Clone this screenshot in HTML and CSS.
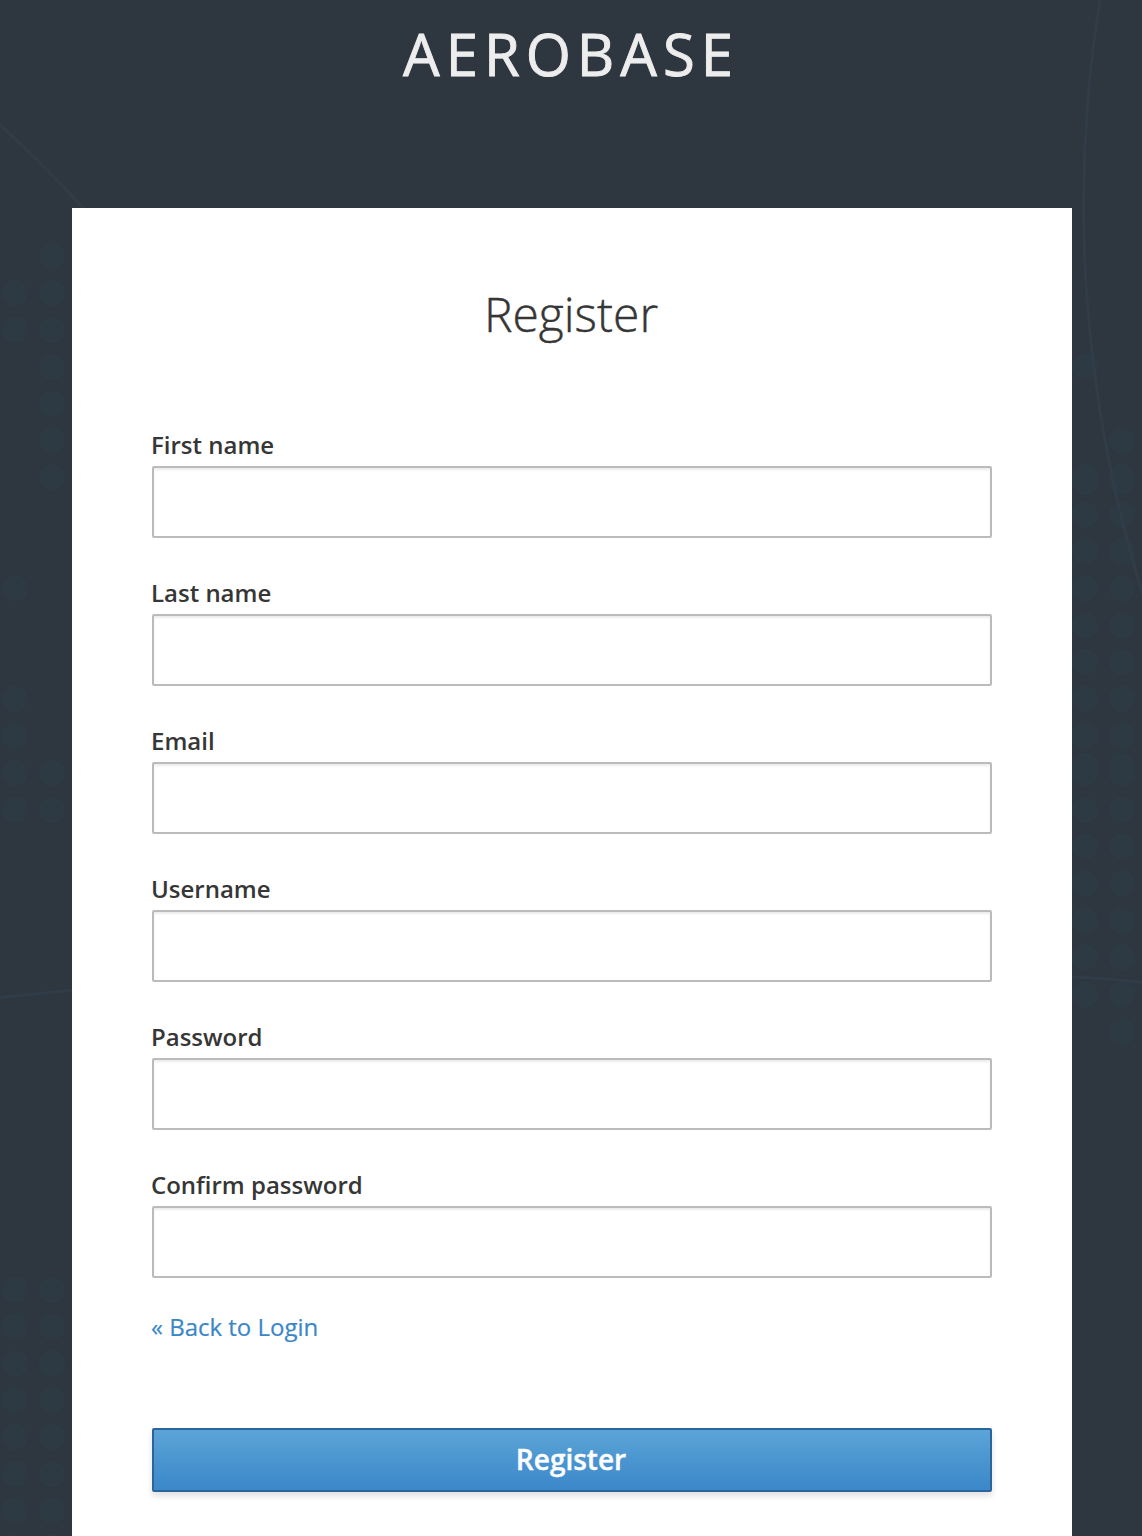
FILE: index.html
```html
<!DOCTYPE html>
<html lang="en">
<head>
<meta charset="utf-8">
<title>Register</title>
<link rel="stylesheet" href="styles.css">
</head>
<body>
<svg class="backdrop" viewBox="0 0 1142 1536" aria-hidden="true">
  <g class="dots">
    <path d="M52 256h0M52 293h0M15 293h0M15 330h0M52 330h0M52 367h0M52 404h0M52 440h0M52 477.500h0M15 588.500h0M15 699h0M15 736h0M15 773h0M52 773h0M15 810h0M52 810h0"/>
    <path d="M15 1290h0M52 1290h0M15 1326.500h0M52 1326.500h0M15 1363.500h0M52 1363.500h0M15 1400h0M52 1400h0M15 1437h0M52 1437h0M15 1474h0M52 1474h0M15 1510.500h0M52 1510.500h0M15 1547h0M52 1547h0"/>
    <path d="M1085 367h0M1122 440.500h0M1085 477v5M1122 477v5M1085 514.500h0M1122 514.500h0M1085 551.500h0M1122 551.500h0M1085 588.500h0M1122 588.500h0M1085 625.500h0M1122 625.500h0M1085 662h0M1122 662h0M1085 699h0M1122 699h0M1085 736h0M1122 736h0M1085 766v7M1122 766v7M1085 810h0M1122 810h0M1085 846.500h0M1122 846.500h0M1085 883.500h0M1122 883.500h0M1085 920.500h0M1122 920.500h0M1085 957.500h0M1122 957.500h0M1085 994.500h0M1122 994.500h0M1122 1032h0"/>
  </g>
  <g class="arcs">
    <path d="M-2 123Q44 165 86 211"/>
    <path d="M0 997.500Q36 994 74 990"/>
    <path d="M1100 0C1084 96 1080 205 1087 300C1095 400 1113 500 1143 595"/>
    <path d="M1070 977Q1106 978 1143 982.500"/>
  </g>
</svg>
<div class="page">
  <header class="brand">AEROBASE</header>
  <main class="card">
    <h1 class="title">Register</h1>
    <form class="form">
      <div class="field"><label class="label" for="firstName">First name</label><input class="input" id="firstName" type="text"></div>
      <div class="field"><label class="label" for="lastName">Last name</label><input class="input" id="lastName" type="text"></div>
      <div class="field"><label class="label" for="email">Email</label><input class="input" id="email" type="text"></div>
      <div class="field"><label class="label" for="username">Username</label><input class="input" id="username" type="text"></div>
      <div class="field"><label class="label" for="password">Password</label><input class="input" id="password" type="password"></div>
      <div class="field"><label class="label" for="confirm">Confirm password</label><input class="input" id="confirm" type="password"></div>
      <a class="back" href="#">« Back to Login</a>
      <button class="submit" type="button">Register</button>
    </form>
  </main>
</div>
</body>
</html>
```
FILE: styles.css
```css
* {
  box-sizing: border-box;
}

body {
  margin: 0;
  height: 1536px;
  overflow: hidden;
  background: #2e363f;
  color: #363636;
  font-family: "Open Sans", "Noto Sans", sans-serif;
  font-size: 24px;
  line-height: 40px;
}

.backdrop {
  position: absolute;
  top: 0;
  left: 0;
  width: 1142px;
  height: 1536px;
}

.dots {
  fill: none;
  stroke: #2d3943;
  stroke-width: 27;
  stroke-linecap: round;
}

.arcs {
  fill: none;
  stroke: #303d48;
  stroke-width: 3;
}

.page {
  position: relative;
  display: flex;
  flex-direction: column;
  height: 1536px;
}

.brand {
  height: 208px;
  flex: none;
  padding: 19px 0 0;
  color: #ededed;
  font-size: 58px;
  font-weight: 400;
  line-height: 70px;
  letter-spacing: 6px;
  text-align: center;
  -webkit-text-stroke: 0.9px #ededed;
}

.card {
  flex: 1;
  width: 1000px;
  margin-left: 72px;
  padding: 79px 80px 0;
  background: #fff;
}

.title {
  margin: 0 2px 139px 0;
  height: 0;
  font-size: 48px;
  font-weight: 300;
  line-height: 53px;
  text-align: center;
  -webkit-text-stroke: 0.4px #363636;
}

.form {
  display: flex;
  flex-direction: column;
}

.field {
  display: flex;
  flex-direction: column;
  height: 148px;
}

.label {
  height: 40px;
  margin-left: -1px;
  font-weight: 600;
  line-height: 38px;
}

.input {
  width: 100%;
  height: 72px;
  padding: 4px 12px;
  border: 2px solid #bbb;
  border-radius: 2px;
  background: #fff;
  box-shadow: inset 0 2px 2px rgba(3, 3, 3, 0.075);
  font: inherit;
}

.back {
  align-self: flex-start;
  height: 40px;
  margin: -7px 0 81px -1px;
  color: #3a87c8;
  text-decoration: none;
  -webkit-text-stroke: 0.2px #3a87c8;
}

.submit {
  height: 64px;
  padding: 0 2px 2px 0;
  border: 2px solid #2b669a;
  border-radius: 2px;
  background: linear-gradient(#5ba5d8, #3b87c8);
  box-shadow: 0 4px 6px rgba(3, 3, 3, 0.12);
  color: #fff;
  font: 600 28px/58px "Open Sans", "Noto Sans", sans-serif;
  -webkit-text-stroke: 0.4px #fff;
}
```
